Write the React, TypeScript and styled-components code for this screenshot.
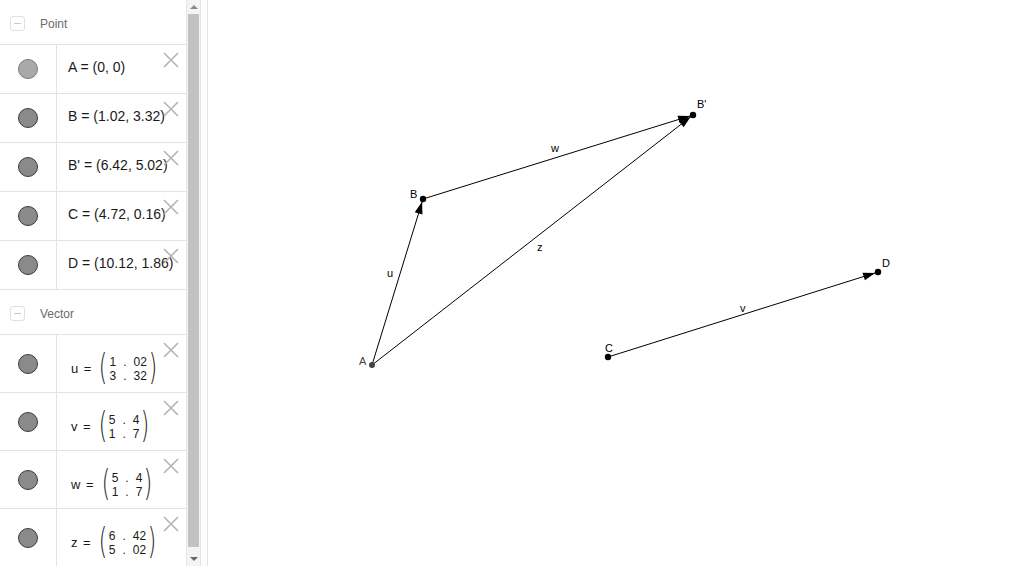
import React from 'react';
import styled, { createGlobalStyle } from 'styled-components';

const GlobalStyle = createGlobalStyle`
  html, body { margin: 0; padding: 0; background: #fff; }
  body { font-family: 'Liberation Sans', Arial, sans-serif; overflow: hidden; }
`;

const Shell = styled.div`
  display: flex;
  width: 1024px;
  height: 566px;
  overflow: hidden;
`;

const AlgebraPanel = styled.div`
  display: flex;
  width: 200px;
  height: 100%;
  flex-shrink: 0;
`;

const List = styled.div`
  width: 186px;
  height: 100%;
  overflow: hidden;
`;

const GroupHeader = styled.div<{ $h: number }>`
  display: flex;
  align-items: center;
  gap: 15px;
  height: ${p => p.$h}px;
  padding: 3px 0 0 10px;
  box-sizing: border-box;
  border-bottom: 1px solid #e2e2e2;
  font-size: 12px;
  color: #6b6b6b;
`;

const Toggle = styled.span`
  position: relative;
  width: 13px;
  height: 13px;
  border: 1px solid #e0e0e0;
  border-radius: 3px;
  &::after {
    content: '';
    position: absolute;
    left: 3px;
    right: 3px;
    top: 6px;
    height: 1px;
    background: #c8c8c8;
  }
`;

const Row = styled.div<{ $h: number }>`
  position: relative;
  display: flex;
  height: ${p => p.$h}px;
  box-sizing: border-box;
  border-bottom: 1px solid #e2e2e2;
`;

const MarbleCell = styled.div`
  display: flex;
  align-items: center;
  justify-content: center;
  width: 56px;
  flex-shrink: 0;
  border-right: 1px solid #e2e2e2;
`;

const Marble = styled.span<{ $light?: boolean }>`
  width: 18px;
  height: 18px;
  border-radius: 50%;
  background: ${p => (p.$light ? '#a9a9a9' : '#8a8a8a')};
  border: 1px solid ${p => (p.$light ? '#7a7a7a' : '#3c3c3c')};
`;

const Formula = styled.div<{ $shift?: number }>`
  display: flex;
  align-items: center;
  padding-left: 11px;
  transform: translateY(${p => p.$shift ?? 0}px);
  font-size: 14px;
  color: #1a1a1a;
  white-space: nowrap;
`;

const VecLabel = styled.span`
  font-size: 13px;
  margin-left: 3px;
  margin-right: 6px;
  word-spacing: 2px;
`;

const Paren = styled.span`
  display: inline-block;
  font-family: 'DejaVu Sans', sans-serif;
  font-size: 36px;
  font-weight: 300;
  line-height: 1;
  transform: scaleX(0.6);
  color: #222;
  margin: -4px -1px 0;
`;

const Matrix = styled.div`
  display: grid;
  grid-template-columns: auto auto auto;
  column-gap: 7px;
  font-size: 12px;
  line-height: 14px;
`;

const Cell = styled.span<{ $right?: boolean }>`
  text-align: ${p => (p.$right ? 'right' : 'left')};
`;

const DeleteBtn = styled.svg`
  position: absolute;
  right: 7px;
  top: 7px;
  width: 16px;
  height: 16px;
`;

const Scrollbar = styled.div`
  display: flex;
  flex-direction: column;
  align-items: center;
  width: 14px;
  background: #f4f4f4;
  border-left: 1px solid #e6e6e6;
  box-sizing: border-box;
`;

const ScrollArrow = styled.div<{ $down?: boolean }>`
  height: 14px;
  display: flex;
  align-items: center;
  justify-content: center;
  &::before {
    content: '';
    border-left: 4px solid transparent;
    border-right: 4px solid transparent;
    ${p => (p.$down ? 'border-top: 4px solid #666;' : 'border-bottom: 4px solid #888;')}
  }
`;

const Thumb = styled.div`
  flex: 1;
  width: 11px;
  background: #c2c2c2;
  margin: 0 0 5px;
`;

const Splitter = styled.div`
  width: 8px;
  flex-shrink: 0;
  box-sizing: border-box;
  border-left: 1px solid #e4e4e4;
  border-right: 1px solid #e4e4e4;
  background: #fcfcfc;
`;

const Canvas = styled.svg`
  flex: 1;
  height: 100%;
  display: block;
  font-family: 'Liberation Sans', Arial, sans-serif;
  font-size: 11px;
`;

const Close = () => (
  <DeleteBtn viewBox="0 0 16 16">
    <path d="M1 1L15 15M15 1L1 15" stroke="#b4b4b4" strokeWidth="1.6" fill="none" />
  </DeleteBtn>
);

type Pt = [number, number];
const P: Record<string, Pt> = {
  A: [372, 365],
  B: [423, 199],
  Bp: [693, 115],
  C: [608, 357],
  D: [878, 272],
};

const arrowHead = (from: Pt, to: Pt) => {
  const dx = to[0] - from[0];
  const dy = to[1] - from[1];
  const len = Math.hypot(dx, dy);
  const ux = dx / len;
  const uy = dy / len;
  const tip: Pt = [to[0] - ux * 3, to[1] - uy * 3];
  const base: Pt = [tip[0] - ux * 12, tip[1] - uy * 12];
  const w = 4;
  return `${tip[0]},${tip[1]} ${base[0] - uy * w},${base[1] + ux * w} ${base[0] + uy * w},${base[1] - ux * w}`;
};

const Vec = ({ from, to }: { from: Pt; to: Pt }) => (
  <g>
    <line x1={from[0]} y1={from[1]} x2={to[0]} y2={to[1]} stroke="#000" strokeWidth="1" />
    <polygon points={arrowHead(from, to)} fill="#000" />
  </g>
);

const points = [
  { name: 'A', value: 'A = (0, 0)', light: true },
  { name: 'B', value: 'B = (1.02, 3.32)' },
  { name: "B'", value: "B' = (6.42, 5.02)" },
  { name: 'C', value: 'C = (4.72, 0.16)' },
  { name: 'D', value: 'D = (10.12, 1.86)' },
];

const vectors = [
  { name: 'u', a: ['1', '02'], b: ['3', '32'] },
  { name: 'v', a: ['5', '4'], b: ['1', '7'] },
  { name: 'w', a: ['5', '4'], b: ['1', '7'] },
  { name: 'z', a: ['6', '42'], b: ['5', '02'] },
];

const App: React.FC = () => (
  <>
    <GlobalStyle />
    <Shell>
      <AlgebraPanel>
        <List>
          <GroupHeader $h={45}>
            <Toggle />
            Point
          </GroupHeader>
          {points.map(p => (
            <Row key={p.name} $h={49}>
              <MarbleCell>
                <Marble $light={p.light} />
              </MarbleCell>
              <Formula $shift={-2}>{p.value}</Formula>
              <Close />
            </Row>
          ))}
          <GroupHeader $h={45}>
            <Toggle />
            Vector
          </GroupHeader>
          {vectors.map(v => (
            <Row key={v.name} $h={58}>
              <MarbleCell>
                <Marble />
              </MarbleCell>
              <Formula $shift={5}>
                <VecLabel>{v.name} =</VecLabel>
                <Paren>(</Paren>
                <Matrix>
                  <Cell>{v.a[0]}</Cell>
                  <Cell>.</Cell>
                  <Cell $right>{v.a[1]}</Cell>
                  <Cell>{v.b[0]}</Cell>
                  <Cell>.</Cell>
                  <Cell $right>{v.b[1]}</Cell>
                </Matrix>
                <Paren>)</Paren>
              </Formula>
              <Close />
            </Row>
          ))}
        </List>
        <Scrollbar>
          <ScrollArrow />
          <Thumb />
          <ScrollArrow $down />
        </Scrollbar>
      </AlgebraPanel>
      <Splitter />
      <Canvas viewBox="208 0 816 566">
        <Vec from={P.A} to={P.B} />
        <Vec from={P.B} to={P.Bp} />
        <Vec from={P.A} to={P.Bp} />
        <Vec from={P.C} to={P.D} />
        <circle cx={P.A[0]} cy={P.A[1]} r="3" fill="#444" />
        <circle cx={P.B[0]} cy={P.B[1]} r="3.2" fill="#000" />
        <circle cx={P.Bp[0]} cy={P.Bp[1]} r="3.2" fill="#000" />
        <circle cx={P.C[0]} cy={P.C[1]} r="3.2" fill="#000" />
        <circle cx={P.D[0]} cy={P.D[1]} r="3.2" fill="#000" />
        <text x="359" y="365" fill="#444">A</text>
        <text x="410" y="198">B</text>
        <text x="697" y="108">B'</text>
        <text x="605" y="352">C</text>
        <text x="882" y="267">D</text>
        <text x="387" y="277">u</text>
        <text x="551" y="152">w</text>
        <text x="537" y="251">z</text>
        <text x="740" y="312">v</text>
      </Canvas>
    </Shell>
  </>
);

export default App;
